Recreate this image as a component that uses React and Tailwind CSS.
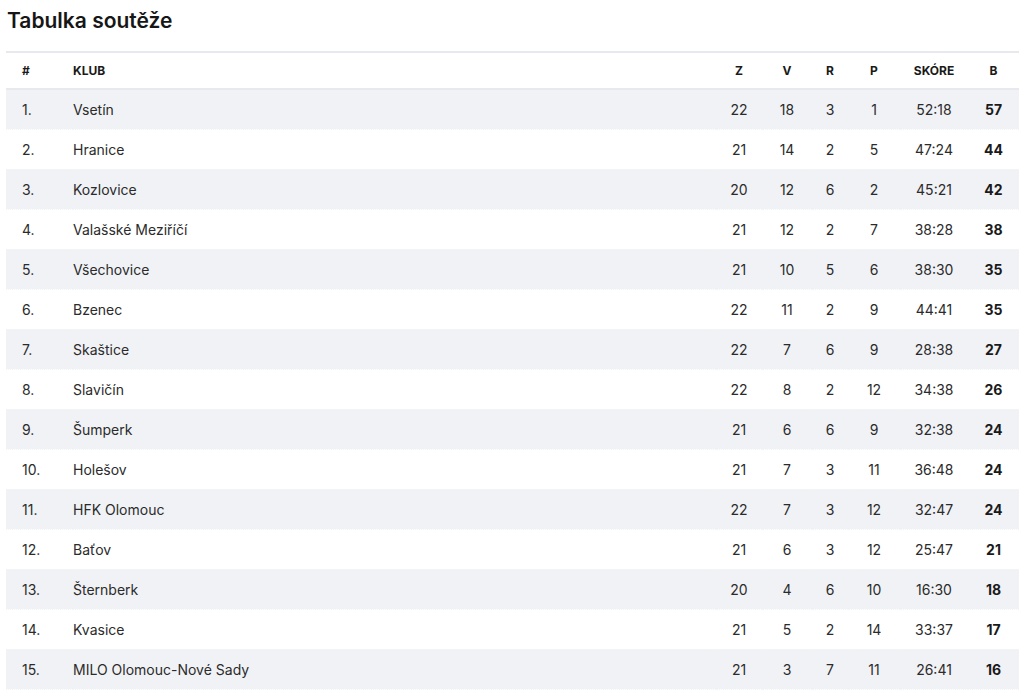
const rows = [
  [1, "Vsetín", 22, 18, 3, 1, "52:18", 57],
  [2, "Hranice", 21, 14, 2, 5, "47:24", 44],
  [3, "Kozlovice", 20, 12, 6, 2, "45:21", 42],
  [4, "Valašské Meziříčí", 21, 12, 2, 7, "38:28", 38],
  [5, "Všechovice", 21, 10, 5, 6, "38:30", 35],
  [6, "Bzenec", 22, 11, 2, 9, "44:41", 35],
  [7, "Skaštice", 22, 7, 6, 9, "28:38", 27],
  [8, "Slavičín", 22, 8, 2, 12, "34:38", 26],
  [9, "Šumperk", 21, 6, 6, 9, "32:38", 24],
  [10, "Holešov", 21, 7, 3, 11, "36:48", 24],
  [11, "HFK Olomouc", 22, 7, 3, 12, "32:47", 24],
  [12, "Baťov", 21, 6, 3, 12, "25:47", 21],
  [13, "Šternberk", 20, 4, 6, 10, "16:30", 18],
  [14, "Kvasice", 21, 5, 2, 14, "33:37", 17],
  [15, "MILO Olomouc-Nové Sady", 21, 3, 7, 11, "26:41", 16],
];

export default function App() {
  return (
    <div className="w-[1024px] h-[690px] overflow-hidden bg-white px-[6px] pr-[5px] text-[#2b2b2b]" style={{ fontFamily: "Inter, 'Noto Sans', sans-serif" }}>
      <h2 className="pt-[8px] h-[51px] text-[21px] leading-[25px] font-semibold text-[#161616] pl-[1px]">Tabulka soutěže</h2>
      <table className="w-full table-fixed border-collapse border-t-2 border-[#e8e9ee]">
        <colgroup>
          <col className="w-[67px]" />
          <col />
          <col className="w-[46px]" />
          <col className="w-[50px]" />
          <col className="w-[36px]" />
          <col className="w-[52px]" />
          <col className="w-[68px]" />
          <col className="w-[51px]" />
        </colgroup>
        <thead>
          <tr className="h-[37px] border-b-2 border-[#e8e9ee] text-[12px] font-bold text-[#1a1a1a] uppercase">
            <th className="text-left pl-[16px] font-bold">#</th>
            <th className="text-left font-bold">Klub</th>
            <th className="text-center font-bold">Z</th>
            <th className="text-center font-bold">V</th>
            <th className="text-center font-bold">R</th>
            <th className="text-center font-bold">P</th>
            <th className="text-center font-bold">Skóre</th>
            <th className="text-center font-bold">B</th>
          </tr>
        </thead>
        <tbody className="text-[14px]">
          {rows.map((r, i) => (
            <tr key={r[0]} className={(i % 2 === 0 ? "bg-[#f1f2f6] " : "bg-white ") + "h-[40px] border-b border-dotted border-[#f3f4f6]"}>
              <td className="pl-[16px]">{r[0]}.</td>
              <td>{r[1]}</td>
              <td className="text-center">{r[2]}</td>
              <td className="text-center">{r[3]}</td>
              <td className="text-center">{r[4]}</td>
              <td className="text-center">{r[5]}</td>
              <td className="text-center">{r[6]}</td>
              <td className="text-center font-bold text-[#1a1a1a]">{r[7]}</td>
            </tr>
          ))}
        </tbody>
      </table>
    </div>
  );
}
